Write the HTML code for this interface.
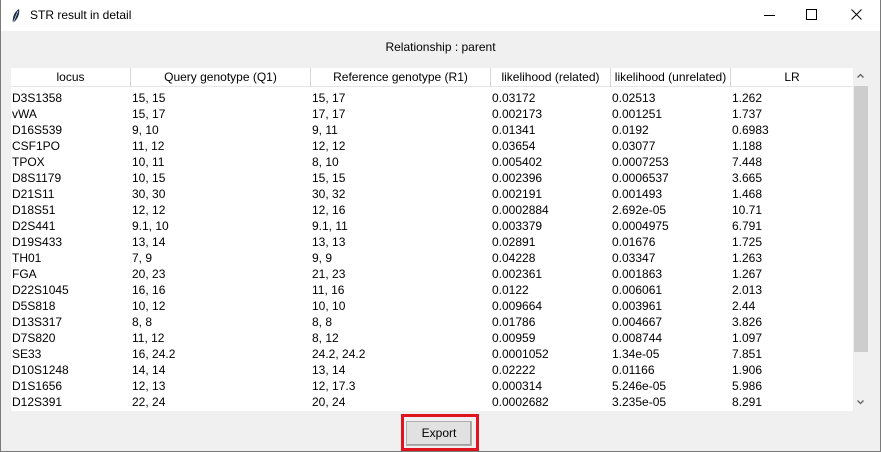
<!DOCTYPE html>
<html><head><style>
*{margin:0;padding:0;box-sizing:border-box}
body{width:881px;height:452px;background:#f0f0f0;font-family:"Liberation Sans",sans-serif;font-size:12px;color:#000;position:relative;overflow:hidden}
.win{position:absolute;left:0;top:0;width:881px;height:452px;border:1px solid #7a7a7a;border-top:none}
.title{position:absolute;left:0;top:0;width:881px;height:31px;background:#fff}
.title .t{position:absolute;left:30px;top:8px;font-size:12px}
.rel{position:absolute;top:40px;left:0;width:881px;text-align:center;font-size:12px}
.tbl{position:absolute;left:11px;top:68px;width:842px;height:343px;background:#fff}
.hdr{position:absolute;left:0;top:0;height:19px;width:842px;background:#fff;border-bottom:1px solid #e5e5e5}
.hdr div{position:absolute;top:0;height:19px;line-height:18px;text-align:center;border-right:1px solid #d5d5d5}
.row{position:absolute;left:0;height:16px;width:842px;line-height:16px}
.row span{position:absolute;left:1px;top:0;white-space:nowrap}
.sb{position:absolute;left:853px;top:68px;width:16px;height:343px;background:#f0f0f0}
.thumb{position:absolute;left:1px;top:18px;width:14px;height:266px;background:#cdcdcd}
.btn{position:absolute;left:406px;top:421px;width:66px;height:25px;background:#e1e1e1;border:1px solid #adadad;box-shadow:inset -1px -1px 0 #a0a0a0;text-align:center;line-height:23px;font-size:12px}
.red{position:absolute;left:401px;top:414px;width:78px;height:37px;border:3px solid #e0141e}
</style></head><body>
<div class="title">
<svg style="position:absolute;left:11px;top:8px" width="10" height="16" viewBox="0 0 10 16"><path d="M2 15 C1 10 3 4 8 1 C9 5 7 11 3 14 Z" fill="#1b2a4a"/><path d="M2 15 L7 3" stroke="#fff" stroke-width="0.6"/></svg>
<div class="t">STR result in detail</div>
<svg style="position:absolute;left:764px;top:15px" width="12" height="2"><rect width="11" height="1" fill="#000"/></svg>
<svg style="position:absolute;left:806px;top:9px" width="12" height="12"><rect x="0.5" y="0.5" width="10" height="10" fill="none" stroke="#000"/></svg>
<svg style="position:absolute;left:851px;top:9px" width="12" height="12"><path d="M0.5 0.5L10.5 10.5M10.5 0.5L0.5 10.5" stroke="#000"/></svg>
</div>
<div class="rel">Relationship : parent</div>
<div class="tbl">
<div class="hdr">
<div style="left:0;width:120px">locus</div>
<div style="left:120px;width:180px">Query genotype (Q1)</div>
<div style="left:300px;width:180px">Reference genotype (R1)</div>
<div style="left:480px;width:120px">likelihood (related)</div>
<div style="left:600px;width:120px">likelihood (unrelated)</div>
<div style="left:720px;width:122px;border-right:none">LR</div>
</div>
<div id="rows"></div>
</div>
<div class="sb"><div class="thumb"></div>
<svg style="position:absolute;left:4px;top:5px" width="8" height="6"><path d="M0.5 4.5L3.5 1.5L6.5 4.5" stroke="#606060" stroke-width="1.3" fill="none"/></svg>
<svg style="position:absolute;left:4px;top:331px" width="8" height="6"><path d="M0.5 1.5L3.5 4.5L6.5 1.5" stroke="#606060" stroke-width="1.3" fill="none"/></svg>
</div>
<div class="btn">Export</div>
<div class="red"></div>
<div class="win"></div>
<script>
var d=[["D3S1358","15, 15","15, 17","0.03172","0.02513","1.262"],["vWA","15, 17","17, 17","0.002173","0.001251","1.737"],["D16S539","9, 10","9, 11","0.01341","0.0192","0.6983"],["CSF1PO","11, 12","12, 12","0.03654","0.03077","1.188"],["TPOX","10, 11","8, 10","0.005402","0.0007253","7.448"],["D8S1179","10, 15","15, 15","0.002396","0.0006537","3.665"],["D21S11","30, 30","30, 32","0.002191","0.001493","1.468"],["D18S51","12, 12","12, 16","0.0002884","2.692e-05","10.71"],["D2S441","9.1, 10","9.1, 11","0.003379","0.0004975","6.791"],["D19S433","13, 14","13, 13","0.02891","0.01676","1.725"],["TH01","7, 9","9, 9","0.04228","0.03347","1.263"],["FGA","20, 23","21, 23","0.002361","0.001863","1.267"],["D22S1045","16, 16","11, 16","0.0122","0.006061","2.013"],["D5S818","10, 12","10, 10","0.009664","0.003961","2.44"],["D13S317","8, 8","8, 8","0.01786","0.004667","3.826"],["D7S820","11, 12","8, 12","0.00959","0.008744","1.097"],["SE33","16, 24.2","24.2, 24.2","0.0001052","1.34e-05","7.851"],["D10S1248","14, 14","13, 14","0.02222","0.01166","1.906"],["D1S1656","12, 13","12, 17.3","0.000314","5.246e-05","5.986"],["D12S391","22, 24","20, 24","0.0002682","3.235e-05","8.291"]];
var x=[0,120,300,480,600,720],h="";
d.forEach(function(r,i){h+='<div class="row" style="top:'+(22+i*16)+'px">';r.forEach(function(c,j){h+='<span style="left:'+(x[j]+1)+'px">'+c+'</span>'});h+='</div>'});
document.getElementById('rows').innerHTML=h;
</script>
</body></html>
